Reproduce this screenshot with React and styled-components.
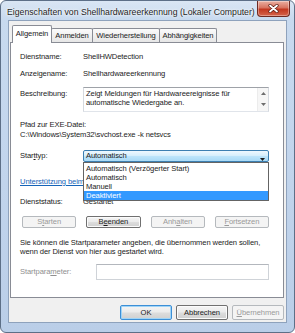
import React from "react";
import styled, { createGlobalStyle } from "styled-components";

const GlobalStyle = createGlobalStyle`
  html, body {
    margin: 0;
    padding: 0;
    background: #ffffff;
  }
  body {
    font-family: "Liberation Sans", Arial, sans-serif;
  }
  * {
    box-sizing: border-box;
  }
`;

const Window = styled.div`
  width: 295px;
  height: 333px;
  border: 1px solid #5d6f87;
  border-radius: 6px;
  background: linear-gradient(180deg, #dae6f4 0%, #c8daef 18px, #c1d4ec 55%, #bacee8 100%);
  display: flex;
  flex-direction: column;
  overflow: hidden;
`;

const TitleBar = styled.div`
  height: 19px;
  display: flex;
  align-items: flex-start;
  padding-left: 6px;
`;

const Title = styled.div`
  flex: 1;
  font-size: 8.7px;
  line-height: 22px;
  color: #1e1e1e;
  white-space: nowrap;
  text-shadow: 0 0 4px #ffffff, 0 0 2px #ffffff;
`;

const CloseButton = styled.div`
  width: 33px;
  height: 16px;
  margin-right: 4px;
  border: 1px solid #6e2a22;
  border-top: none;
  border-radius: 0 0 4px 4px;
  background: linear-gradient(180deg, #eab0a2 0%, #d7735f 45%, #c2371f 55%, #d5654c 100%);
  box-shadow: inset 0 0 0 1px rgba(255, 255, 255, 0.35);
  display: flex;
  align-items: center;
  justify-content: center;
`;

const Client = styled.div`
  flex: 1;
  margin: 0 7px 9px;
  background: #f0f0f0;
  border: 1px solid #8ea2bc;
  display: flex;
  flex-direction: column;
  font-size: 7.6px;
  letter-spacing: -0.1px;
  color: #1b1b1b;
`;

const TabStrip = styled.div`
  display: flex;
  align-items: flex-end;
  height: 17px;
  margin-top: 4px;
  padding-left: 3px;
  position: relative;
  z-index: 1;
`;

const Tab = styled.div`
  width: ${(p) => p.$w}px;
  height: ${(p) => (p.$active ? 18 : 14)}px;
  margin-bottom: ${(p) => (p.$active ? -1 : 0)}px;
  margin-left: ${(p) => (p.$first ? 0 : -1)}px;
  border: 1px solid #898c95;
  border-bottom: none;
  border-radius: 2px 2px 0 0;
  background: ${(p) =>
    p.$active ? "#ffffff" : "linear-gradient(180deg, #fbfbfb 0%, #f0f0f0 50%, #e6e6e6 100%)"};
  text-align: center;
  line-height: ${(p) => (p.$active ? 15 : 13)}px;
  white-space: nowrap;
  position: relative;
  z-index: ${(p) => (p.$active ? 2 : 1)};
`;

const Panel = styled.div`
  height: 256px;
  margin: 0 2px 0 1px;
  background: #ffffff;
  border: 1px solid #898c95;
  padding: 9px 14px 0 9px;
  display: flex;
  flex-direction: column;
`;

const Field = styled.div`
  display: flex;
  align-items: ${(p) => (p.$top ? "flex-start" : "center")};
  margin-top: ${(p) => p.$mt || 0}px;
  min-height: 10px;
  line-height: 10px;
  position: relative;
`;

const Label = styled.div`
  width: ${(p) => p.$w || 63}px;
  flex: none;
  padding-top: ${(p) => p.$pt || 0}px;
  color: ${(p) => (p.$disabled ? "#8f8f8f" : "inherit")};
  white-space: nowrap;
`;

const Value = styled.div`
  white-space: nowrap;
`;

const Line = styled.div`
  margin-top: ${(p) => p.$mt || 0}px;
  line-height: ${(p) => p.$lh || 10}px;
  white-space: nowrap;
`;

const DescBox = styled.div`
  flex: 1;
  height: 25px;
  border: 1px solid #b5b8be;
  border-color: #9ea2a8 #d5d9df #e0e4ea #d5d9df;
  background: #ffffff;
  display: flex;
`;

const DescText = styled.div`
  flex: 1;
  padding: 1px 2px;
  line-height: 9px;
`;

const ScrollBar = styled.div`
  width: 11px;
  background: #f6f6f6;
  border-left: 1px solid #ececec;
  display: flex;
  flex-direction: column;
  align-items: center;
  justify-content: space-between;
  padding: 4px 0 5px;
`;

const Combo = styled.div`
  flex: 1;
  height: 12px;
  position: relative;
  border: 1px solid #3c7fb1;
  border-radius: 2px;
  background: linear-gradient(180deg, #eef8fe 0%, #d7effc 45%, #bce4fa 55%, #a8d9f6 100%);
  display: flex;
  align-items: center;
  padding-left: 2px;
  line-height: 10px;
`;

const ComboArrow = styled.div`
  position: absolute;
  right: 3px;
  top: 3px;
`;

const DropList = styled.div`
  position: absolute;
  top: 11px;
  left: -1px;
  right: -1px;
  background: #ffffff;
  border: 1px solid #646464;
  padding: 1px 0 0;
  z-index: 5;
`;

const DropItem = styled.div`
  height: 9px;
  line-height: 9px;
  padding-left: 2px;
  background: ${(p) => (p.$selected ? "#3399ff" : "transparent")};
  color: ${(p) => (p.$selected ? "#ffffff" : "#1b1b1b")};
  white-space: nowrap;
`;

const HelpLink = styled.div`
  margin-top: 15px;
  line-height: 10px;
  width: 63px;
  overflow: hidden;
  white-space: nowrap;
  color: #1664b8;
  text-decoration: underline;
`;

const ButtonRow = styled.div`
  display: grid;
  grid-template-columns: repeat(4, 1fr);
  gap: 10px;
  margin: 9px 0 0 2px;
`;

const Button = styled.div`
  height: ${(p) => p.$h || 12}px;
  width: ${(p) => (p.$w ? p.$w + "px" : "auto")};
  border: 1px solid ${(p) => (p.$disabled ? "#b5b9bd" : p.$default ? "#3c8fd6" : "#707070")};
  border-radius: 2px;
  background: ${(p) =>
    p.$disabled
      ? "#f4f4f4"
      : "linear-gradient(180deg, #f4f4f4 0%, #ebebeb 48%, #dddddd 52%, #d0d0d0 100%)"};
  box-shadow: ${(p) =>
    p.$default ? "inset 0 0 0 1px #9fd4f7" : p.$disabled ? "none" : "inset 0 0 0 1px #fbfbfb"};
  color: ${(p) => (p.$disabled ? "#9a9a9a" : "#1b1b1b")};
  display: flex;
  align-items: center;
  justify-content: center;
  line-height: 10px;
  white-space: nowrap;
`;

const Key = styled.span`
  text-decoration: underline;
`;

const Note = styled.div`
  margin-top: 10px;
  line-height: 9px;
  white-space: nowrap;
`;

const TextInput = styled.div`
  flex: 1;
  height: 16px;
  border: 1px solid #cfd3d8;
  border-top-color: #b3b7bd;
  background: #ffffff;
`;

const Footer = styled.div`
  display: flex;
  justify-content: flex-end;
  gap: 4px;
  margin-top: 7px;
  padding-right: 2px;
`;

const CloseGlyph = () => (
  <svg width="11" height="9" viewBox="0 0 11 9">
    <path d="M2 1.5 L9 7.5 M9 1.5 L2 7.5" stroke="#5a1a12" strokeWidth="3.2" strokeLinecap="round" />
    <path d="M2 1.5 L9 7.5 M9 1.5 L2 7.5" stroke="#ffffff" strokeWidth="1.8" strokeLinecap="round" />
  </svg>
);

const SmallTriangle = ({ up, color = "#6d6d6d" }) => (
  <svg width="5" height="3" viewBox="0 0 5 3">
    <path d={up ? "M0 3 L2.5 0 L5 3 Z" : "M0 0 L5 0 L2.5 3 Z"} fill={color} />
  </svg>
);

const options = [
  "Automatisch (Verzögerter Start)",
  "Automatisch",
  "Manuell",
  "Deaktiviert",
];

const App = () => {
  return (
    <>
      <GlobalStyle />
      <Window>
        <TitleBar>
          <Title>Eigenschaften von Shellhardwareerkennung (Lokaler Computer)</Title>
          <CloseButton>
            <CloseGlyph />
          </CloseButton>
        </TitleBar>
        <Client>
          <TabStrip>
            <Tab $w={40} $first $active>
              Allgemein
            </Tab>
            <Tab $w={42}>Anmelden</Tab>
            <Tab $w={68}>Wiederherstellung</Tab>
            <Tab $w={58}>Abhängigkeiten</Tab>
          </TabStrip>
          <Panel>
            <Field>
              <Label>Dienstname:</Label>
              <Value>ShellHWDetection</Value>
            </Field>
            <Field $mt={7}>
              <Label>Anzeigename:</Label>
              <Value>Shellhardwareerkennung</Value>
            </Field>
            <Field $mt={8} $top>
              <Label $pt={2}>Beschreibung:</Label>
              <DescBox>
                <DescText>
                  Zeigt Meldungen für Hardwareereignisse für
                  <br />
                  automatische Wiedergabe an.
                </DescText>
                <ScrollBar>
                  <SmallTriangle up />
                  <SmallTriangle />
                </ScrollBar>
              </DescBox>
            </Field>
            <Line $mt={8}>Pfad zur EXE-Datei:</Line>
            <Line>C:\Windows\System32\svchost.exe -k netsvcs</Line>
            <Field $mt={10}>
              <Label>
                Star<Key>t</Key>typ:
              </Label>
              <Combo>
                Automatisch
                <ComboArrow>
                  <SmallTriangle color="#1b1b1b" />
                </ComboArrow>
                <DropList>
                  {options.map((o) => (
                    <DropItem key={o} $selected={o === "Deaktiviert"}>
                      {o}
                    </DropItem>
                  ))}
                </DropList>
              </Combo>
            </Field>
            <HelpLink>Unterstützung beim Konfigurieren von Dienststartoptionen.</HelpLink>
            <Field $mt={10}>
              <Label>Dienststatus:</Label>
              <Value>Gestartet</Value>
            </Field>
            <ButtonRow>
              <Button $disabled>
                S<Key>t</Key>arten
              </Button>
              <Button>
                B<Key>e</Key>enden
              </Button>
              <Button $disabled>
                Anh<Key>a</Key>lten
              </Button>
              <Button $disabled>
                <Key>F</Key>ortsetzen
              </Button>
            </ButtonRow>
            <Note>
              Sie können die Startparameter angeben, die übernommen werden sollen,
              <br />
              wenn der Dienst von hier aus gestartet wird.
            </Note>
            <Field $mt={8}>
              <Label $w={76} $disabled>
                Startpara<Key>m</Key>eter:
              </Label>
              <TextInput />
            </Field>
          </Panel>
          <Footer>
            <Button $default $w={52} $h={15}>
              OK
            </Button>
            <Button $w={52} $h={15}>
              Abbrechen
            </Button>
            <Button $disabled $w={52} $h={15}>
              <Key>Ü</Key>bernehmen
            </Button>
          </Footer>
        </Client>
      </Window>
    </>
  );
};

export default App;
